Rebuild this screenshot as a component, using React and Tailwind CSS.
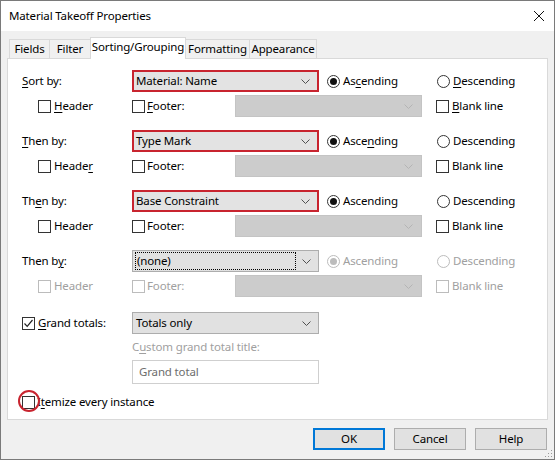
import React from "react";

const Chevron = ({ disabled }) => (
  <svg width="9" height="5" viewBox="0 0 9 5" className="shrink-0">
    <path d="M0.5 0.5 L4.5 4.5 L8.5 0.5" fill="none" stroke={disabled ? "#b4b4b4" : "#505050"} strokeWidth="1" />
  </svg>
);

const U = ({ children }) => <span className="underline underline-offset-2">{children}</span>;

const Check = ({ checked, disabled }) => (
  <span
    className={`inline-flex w-[13px] h-[13px] shrink-0 items-center justify-center border bg-white ${
      disabled ? "border-[#bcbcbc]" : "border-[#333333]"
    }`}
  >
    {checked && (
      <svg width="11" height="11" viewBox="0 0 11 11">
        <path d="M1.5 5.5 L4.2 8.3 L9.5 2" fill="none" stroke="#222" strokeWidth="1.2" />
      </svg>
    )}
  </span>
);

const Radio = ({ on, disabled }) => (
  <span
    className={`inline-flex w-[13px] h-[13px] shrink-0 items-center justify-center rounded-full border bg-white ${
      disabled ? "border-[#bcbcbc]" : "border-[#333333]"
    }`}
  >
    {on && <span className={`w-[7px] h-[7px] rounded-full ${disabled ? "bg-[#bcbcbc]" : "bg-[#111]"}`} />}
  </span>
);

// combo box: red annotation border, disabled gray, or plain
const Combo = ({ value, red, disabled, focus, w = "w-[187px]" }) => {
  if (disabled)
    return (
      <div className={`${w} h-[22px] bg-[#cccccc] border border-[#c4c4c4] flex items-center justify-end pr-[8px]`}>
        <Chevron disabled />
      </div>
    );
  return (
    <div
      className={`${w} h-[22px] flex items-center pr-[7px] ${
        red ? "border-2 border-[#c8242f] bg-[#e3e3e3] pl-[1px]" : "border border-[#adadad] bg-[#e1e1e1] pl-[2px]"
      }`}
    >
      <span
        className={`flex-1 h-[18px] flex items-center pl-[1px] mr-[6px] ${
          focus ? "border border-dotted border-black" : ""
        }`}
      >
        {value}
      </span>
      <Chevron />
    </div>
  );
};

const SortGroup = ({ label, value, red, disabled, focus, header = "Header", footer, asc, desc, blank }) => {
  const txt = disabled ? "text-[#a0a0a0]" : "text-black";
  return (
    <div className="flex flex-col gap-[3px]">
      <div className="flex items-center h-[22px] pl-[14px]">
        <div className="w-[110px]">{label}</div>
        <Combo value={value} red={red} focus={focus} />
        <label className={`ml-[8px] w-[110px] flex items-center gap-[3px] ${txt}`}>
          <Radio on disabled={disabled} />
          <span>{asc}</span>
        </label>
        <label className={`flex items-center gap-[3px] ${txt}`}>
          <Radio disabled={disabled} />
          <span>{desc}</span>
        </label>
      </div>
      <div className={`flex items-center h-[22px] pl-[30px] ${txt}`}>
        <label className="w-[94px] flex items-center gap-[3px]">
          <Check disabled={disabled} />
          <span>{header}</span>
        </label>
        <label className="w-[103px] flex items-center gap-[2px]">
          <Check disabled={disabled} />
          <span>{footer}</span>
        </label>
        <Combo disabled />
        <label className="ml-[14px] flex items-center gap-[3px]">
          <Check disabled={disabled} />
          <span>{blank}</span>
        </label>
      </div>
    </div>
  );
};

const Tab = ({ children, w, first }) => (
  <div
    className={`${w} h-[19px] flex items-center justify-center border border-b-0 border-[#d9d9d9] bg-[#f0f0f0] ${
      first ? "" : "border-l-0"
    }`}
  >
    {children}
  </div>
);

export default function App() {
  return (
    <div
      className="relative w-[555px] h-[460px] bg-[#f0f0f0] border border-[#7a7a7a] text-[11.5px] tracking-[-0.15px] text-black leading-none overflow-hidden"
      style={{ fontFamily: '"Noto Sans", "Open Sans", sans-serif' }}
    >
      {/* title bar */}
      <div className="h-[30px] bg-white flex items-center justify-between pl-[8px] pr-[9px]">
        <span>Material Takeoff Properties</span>
        <svg width="12" height="12" viewBox="0 0 12 12">
          <path d="M1 1 L11 11 M11 1 L1 11" stroke="#111" strokeWidth="1" />
        </svg>
      </div>

      {/* tabs */}
      <div className="flex items-end pl-[8px] mt-[5px] h-[22px]">
        <Tab w="w-[41px]" first>Fields</Tab>
        <Tab w="w-[41px]">Filter</Tab>
        <div className="w-[96px] h-[22px] flex justify-center items-start pt-[3px] border border-b-0 border-[#d9d9d9] bg-white -mb-[1px] -ml-[1px] relative z-10">
          Sorting/Grouping
        </div>
        <Tab w="w-[64px]">Formatting</Tab>
        <Tab w="w-[67px]">Appearance</Tab>
      </div>

      {/* panel */}
      <div className="mx-[6px] h-[362px] bg-white border border-[#d9d9d9] pt-[11px] flex flex-col">
        <div className="flex flex-col gap-[13px]">
          <SortGroup
            label={<><U>S</U>ort by:</>}
            value="Material: Name"
            red
            footer={<><U>F</U>ooter:</>}
            asc={<>As<U>c</U>ending</>}
            desc={<><U>D</U>escending</>}
            blank={<><U>B</U>lank line</>}
            header={<><U>H</U>eader</>}
          />
          <SortGroup
            label={<><U>T</U>hen by:</>}
            value="Type Mark"
            red
            header={<>Heade<U>r</U></>}
            footer="Footer:"
            asc={<>Asce<U>n</U>ding</>}
            desc="Descending"
            blank="Blank line"
          />
          <SortGroup
            label={<>Th<U>e</U>n by:</>}
            value="Base Constraint"
            red
            header="Header"
            footer="Footer:"
            asc="Ascending"
            desc="Descending"
            blank="Blank line"
          />
          <SortGroup
            label={<>Then b<U>y</U>:</>}
            value="(none)"
            focus
            disabled
            header="Header"
            footer="Footer:"
            asc="Ascending"
            desc="Descending"
            blank="Blank line"
          />
        </div>

        {/* grand totals */}
        <div className="flex items-center h-[22px] pl-[14px] mt-[15px]">
          <label className="w-[110px] flex items-center gap-[3px]">
            <Check checked />
            <span><U>G</U>rand totals:</span>
          </label>
          <Combo value="Totals only" />
        </div>
        <div className="pl-[124px] mt-[6px] text-[#a0a0a0] h-[14px] flex items-center">
          <span>C<U>u</U>stom grand total title:</span>
        </div>
        <div className="pl-[124px] mt-[6px]">
          <div className="w-[187px] h-[24px] border border-[#cfcfcf] bg-white text-[#6d6d6d] flex items-center pl-[6px]">
            Grand total
          </div>
        </div>

        <div className="relative flex items-center h-[14px] pl-[14px] mt-[11px]">
          <label className="flex items-center gap-[2px]">
            <Check />
            <span>I<U>t</U>emize every instance</span>
          </label>
          <span className="absolute left-[10px] top-[-5px] w-[22px] h-[22px] rounded-full border-2 border-[#c8242f]" />
        </div>
      </div>

      {/* buttons */}
      <div className="flex justify-end gap-[9px] pr-[7px] mt-[8px]">
        <button className="w-[72px] h-[22px] border-2 border-[#0078d7] bg-[#e1e1e1]">OK</button>
        <button className="w-[72px] h-[22px] border border-[#adadad] bg-[#e1e1e1]">Cancel</button>
        <button className="w-[72px] h-[22px] border border-[#adadad] bg-[#e1e1e1]">Help</button>
      </div>

      {/* resize grip */}
      <svg className="absolute right-[1px] bottom-[1px]" width="10" height="10" viewBox="0 0 10 10">
        {[[8, 2], [8, 5], [5, 5], [8, 8], [5, 8], [2, 8]].map(([x, y], i) => (
          <rect key={i} x={x} y={y} width="1" height="1" fill="#9a9a9a" />
        ))}
      </svg>
    </div>
  );
}
